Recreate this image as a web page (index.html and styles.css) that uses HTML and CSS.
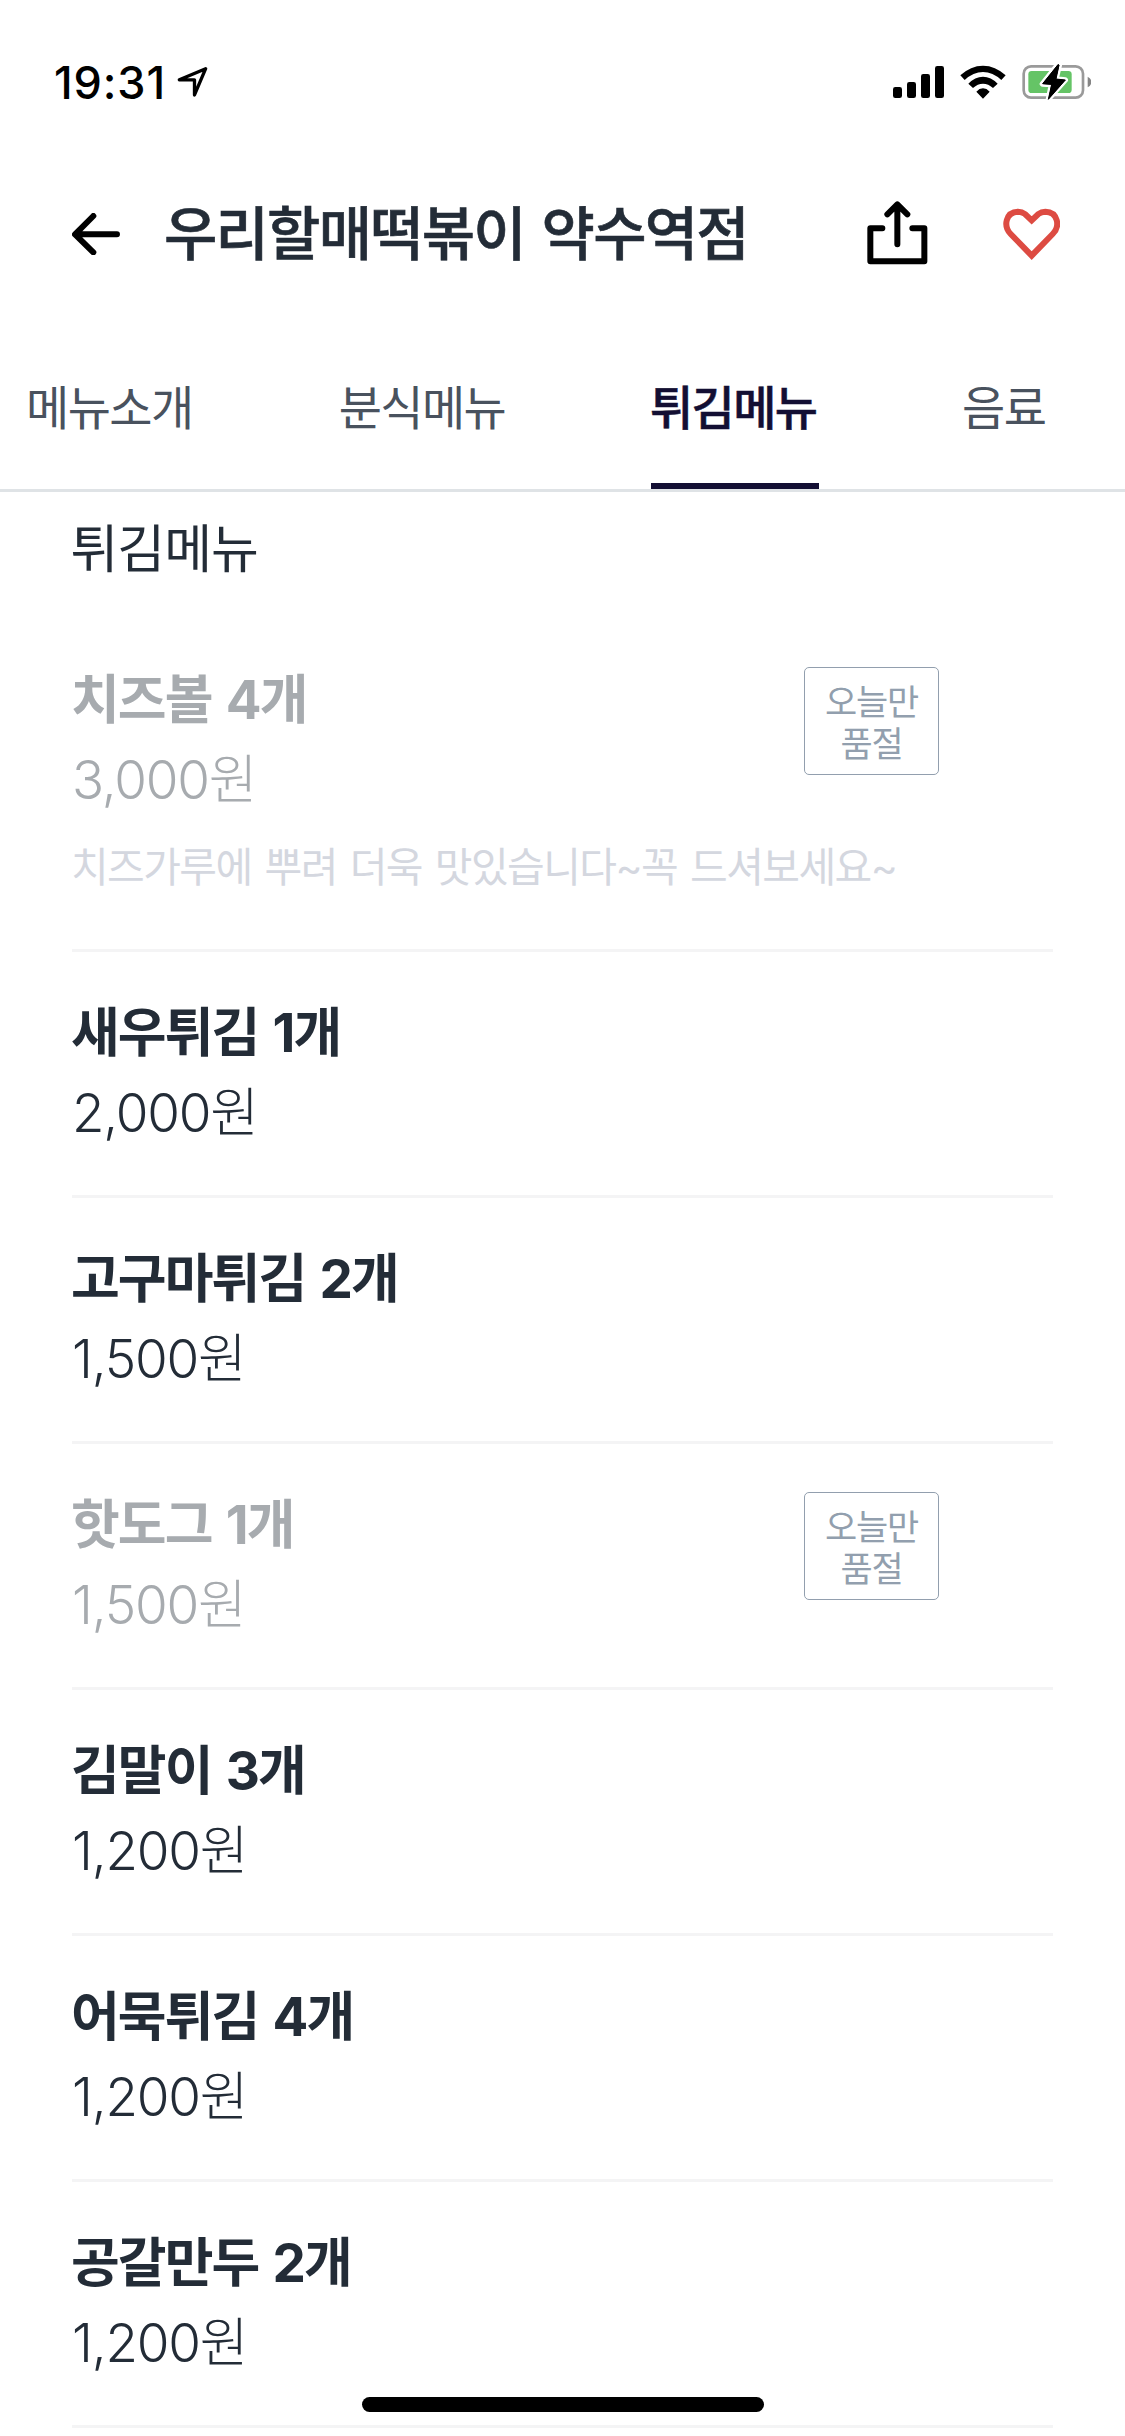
FILE: index.html
```html
<!DOCTYPE html>
<html lang="ko">
<head>
<meta charset="utf-8">
<title>우리할매떡볶이 약수역점</title>
<link rel="stylesheet" href="styles.css">
</head>
<body>
<div class="screen">
  <div class="status">
    <span class="clock">19:31</span>
    <svg class="location" viewBox="530 78 93 94" width="31" height="31.3"><path d="M616 86L537 119.500H582.500V165Z" fill="none" stroke="#000" stroke-width="10" stroke-linejoin="round"/></svg>
    <svg class="signal" viewBox="219 78 153 96" width="51" height="32"><rect x="219" y="141" width="27" height="33" rx="7"/><rect x="261" y="126" width="27" height="48" rx="7"/><rect x="303" y="102" width="27" height="72" rx="7"/><rect x="345" y="78" width="27" height="96" rx="7"/></svg>
    <svg class="wifi" viewBox="420 73 138 102" width="46" height="34"><path d="M421 104Q452 75 489 75T557 104L544 118Q518 94 489 94T434 118ZM445 129Q465 108 489 108T533 129L519 142Q505 129 489 129T459 142ZM469 153Q478 143 489 143T509 153L489 174Z"/></svg>
    <svg class="battery" viewBox="605 69 209 114" width="69.7" height="38"><rect x="610" y="79" width="178" height="94" rx="22" fill="none" stroke="#9a9a9a" stroke-width="8"/><path d="M802 110Q813 115 813 126T802 142Z" fill="#858585"/><rect x="624" y="93" width="130" height="66" rx="10" fill="#65c466"/><path d="M713 73L666 132L693 134L684 178L735 120L707 117L717 76Z" fill="#000" stroke="#fff" stroke-width="16" stroke-linejoin="round" paint-order="stroke"/><path d="M713 74L667 131L694 133L684 178L735 120L707 117L716 75Z" stroke="#000" stroke-width="3" stroke-linejoin="round"/></svg>
  </div>
  <header class="header">
    <svg class="back" viewBox="216 518 144 127" width="48" height="42.3"><path d="M351 582H226M280 527L225 582L280 636" fill="none" stroke="#000" stroke-width="18" stroke-linecap="round" stroke-linejoin="round"/></svg>
    <h1 class="title">우리할매떡볶이 약수역점</h1>
    <svg class="share" viewBox="140 482 182 191" width="60.700" height="63.700"><path d="M186 564H150V662.500H312V564H276M231 612V493M201 522L231 492L261 522" fill="none" stroke="#000" stroke-width="18" stroke-linecap="round" stroke-linejoin="round"/></svg>
    <svg class="heart" viewBox="550 503 173 156" width="57.700" height="52"><path d="M636 646L573 581C550 557 558 515 595 514Q607 514 616 521L636 540L656 521Q665 514 677 514C714 515 723 557 699 581Z" fill="none" stroke="#dd4b42" stroke-width="18"/></svg>
  </header>
  <nav class="tabs">
    <span class="tab">메뉴소개</span>
    <span class="tab">분식메뉴</span>
    <span class="tab active">튀김메뉴</span>
    <span class="tab short">음료</span>
  </nav>
  <main class="menu">
    <h2 class="section">튀김메뉴</h2>
    <div class="item soldout first"><div class="info"><div class="name">치즈볼 4개</div><div class="price">3,000원</div></div><div class="badge">오늘만<br>품절</div><p class="desc">치즈가루에 뿌려 더욱 맛있습니다~꼭 드셔보세요~</p></div>
    <div class="item"><div class="info"><div class="name">새우튀김 1개</div><div class="price">2,000원</div></div></div>
    <div class="item"><div class="info"><div class="name">고구마튀김 2개</div><div class="price">1,500원</div></div></div>
    <div class="item soldout"><div class="info"><div class="name">핫도그 1개</div><div class="price">1,500원</div></div><div class="badge">오늘만<br>품절</div></div>
    <div class="item"><div class="info"><div class="name">김말이 3개</div><div class="price">1,200원</div></div></div>
    <div class="item"><div class="info"><div class="name">어묵튀김 4개</div><div class="price">1,200원</div></div></div>
    <div class="item"><div class="info"><div class="name">공갈만두 2개</div><div class="price">1,200원</div></div></div>
  </main>
  <div class="home-indicator"></div>
</div>
</body>
</html>
```
FILE: styles.css
```css
* { box-sizing: border-box; margin: 0; padding: 0; }
body {
  width: 1125px;
  background: #fff;
  color: #232c37;
  font-family: Inter, "Noto Sans CJK KR", sans-serif;
}
svg { display: block; flex: none; }
.screen {
  position: relative;
  width: 1125px;
  height: 2436px;
  overflow: hidden;
}
.status {
  display: flex;
  align-items: center;
  height: 164px;
  padding-left: 54px;
  color: #000;
}
.clock { width: 123px; font-size: 45px; font-weight: 550; letter-spacing: 0.900px; white-space: nowrap; }
.signal { margin-left: 685px; }
.wifi { margin-left: 16px; }
.battery { margin-left: 15.700px; }
.header {
  display: flex;
  align-items: center;
  height: 140px;
  padding-left: 72px;
}
.title {
  width: 703px;
  margin-left: 44px;
  font-size: 58px;
  font-weight: 500;
  line-height: 80px;
  letter-spacing: -1.800px;
  word-spacing: 3px;
  white-space: nowrap;
  -webkit-text-stroke: 0.600px currentColor;
}
.share { margin-top: -2px; }
.heart { margin-left: 75px; }
.tabs {
  display: flex;
  gap: 144.700px;
  height: 188px;
  padding-left: 26px;
  border-bottom: 3px solid #dfe3e6;
}
.tab {
  width: 168px;
  height: 185px;
  padding-top: 64px;
  color: #49525e;
  font-size: 47px;
  line-height: 80px;
  letter-spacing: -1.600px;
  white-space: nowrap;
}
.short { width: 84px; text-indent: -2px; }
.active {
  border-bottom: 6px solid #130f33;
  color: #130f33;
  font-weight: 500;
  text-indent: -1.500px;
  -webkit-text-stroke: 0.500px currentColor;
}
.menu { padding: 28px 72px 0; }
.section {
  height: 99px;
  font-size: 52px;
  font-weight: 400;
  line-height: 60px;
  letter-spacing: -1px;
  text-indent: -1.500px;
}
.item {
  display: flex;
  flex-wrap: wrap;
  align-content: flex-start;
  width: 981px;
  height: 246px;
  padding-top: 41px;
  border-bottom: 3px solid #f4f4f5;
}
.first { height: 333px; }
.info { width: 732px; }
.name, .price {
  font-size: 53px;
  line-height: 80px;
  letter-spacing: -1.900px;
  text-indent: -1px;
  white-space: nowrap;
}
.name { font-weight: 700; word-spacing: 3.500px; }
.price { font-weight: 300; letter-spacing: -1.200px; text-indent: 0; }
.soldout { color: #a7abaf; }
.badge {
  width: 135px;
  height: 108px;
  margin-top: 7px;
  padding-top: 13px;
  border: 1.500px solid #929fae;
  border-radius: 5px;
  color: #929fae;
  font-size: 35px;
  line-height: 42px;
  letter-spacing: -1.200px;
  text-align: center;
}
.desc {
  width: 100%;
  margin-top: 17px;
  color: #d4d7df;
  font-size: 41px;
  line-height: 60px;
  letter-spacing: -1.600px;
  word-spacing: 3px;
  text-indent: -1px;
  white-space: nowrap;
}
.home-indicator {
  position: absolute;
  left: 362px;
  bottom: 24px;
  width: 402px;
  height: 15px;
  border-radius: 8px;
  background: #000;
}
```
